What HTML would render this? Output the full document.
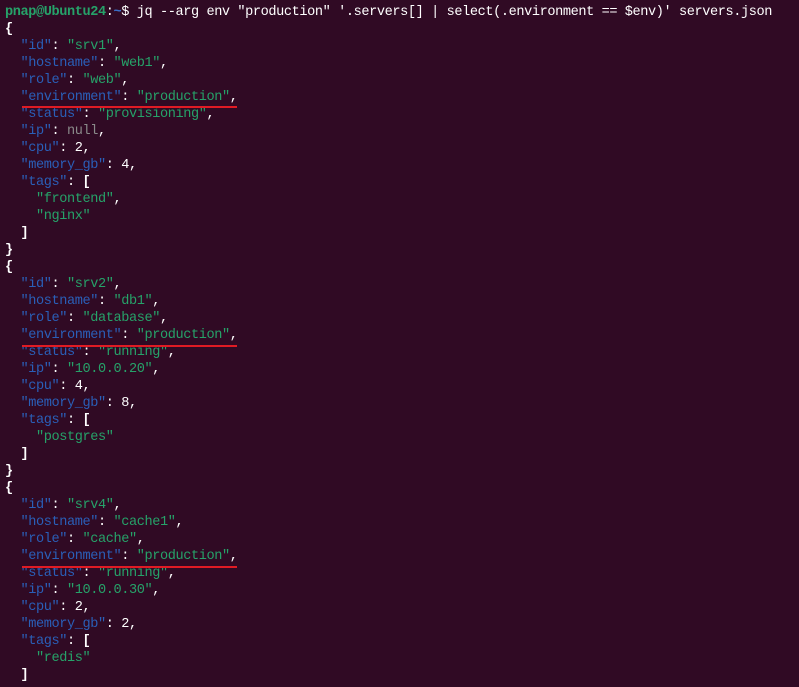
<!DOCTYPE html>
<html><head><style>
html,body{margin:0;padding:0;background:#300a24;width:799px;height:687px;overflow:hidden}
pre{margin:0;padding:4px 0 0 5px;font-family:"Liberation Mono",monospace;font-size:13.6px;letter-spacing:-0.41px;line-height:17px;color:#ffffff;white-space:pre}
.p{color:#26a269;font-weight:bold}.d{color:#3a6fc8;font-weight:bold}
.k{color:#2a5fb8}.s{color:#26a269}.n{color:#8a8a8a}.w{font-weight:bold}
.u{position:absolute;left:22px;width:215px;height:2px;background:#e01b24}
</style></head><body>
<pre><span class="p">pnap@Ubuntu24</span>:<span class="d">~</span>$ jq --arg env "production" '.servers[] | select(.environment == $env)' servers.json
<span class="w">{</span>
  <span class="k">"id"</span>: <span class="s">"srv1"</span>,
  <span class="k">"hostname"</span>: <span class="s">"web1"</span>,
  <span class="k">"role"</span>: <span class="s">"web"</span>,
  <span class="k">"environment"</span>: <span class="s">"production"</span>,
  <span class="k">"status"</span>: <span class="s">"provisioning"</span>,
  <span class="k">"ip"</span>: <span class="n">null</span>,
  <span class="k">"cpu"</span>: 2,
  <span class="k">"memory_gb"</span>: 4,
  <span class="k">"tags"</span>: <span class="w">[</span>
    <span class="s">"frontend"</span>,
    <span class="s">"nginx"</span>
  <span class="w">]</span>
<span class="w">}</span>
<span class="w">{</span>
  <span class="k">"id"</span>: <span class="s">"srv2"</span>,
  <span class="k">"hostname"</span>: <span class="s">"db1"</span>,
  <span class="k">"role"</span>: <span class="s">"database"</span>,
  <span class="k">"environment"</span>: <span class="s">"production"</span>,
  <span class="k">"status"</span>: <span class="s">"running"</span>,
  <span class="k">"ip"</span>: <span class="s">"10.0.0.20"</span>,
  <span class="k">"cpu"</span>: 4,
  <span class="k">"memory_gb"</span>: 8,
  <span class="k">"tags"</span>: <span class="w">[</span>
    <span class="s">"postgres"</span>
  <span class="w">]</span>
<span class="w">}</span>
<span class="w">{</span>
  <span class="k">"id"</span>: <span class="s">"srv4"</span>,
  <span class="k">"hostname"</span>: <span class="s">"cache1"</span>,
  <span class="k">"role"</span>: <span class="s">"cache"</span>,
  <span class="k">"environment"</span>: <span class="s">"production"</span>,
  <span class="k">"status"</span>: <span class="s">"running"</span>,
  <span class="k">"ip"</span>: <span class="s">"10.0.0.30"</span>,
  <span class="k">"cpu"</span>: 2,
  <span class="k">"memory_gb"</span>: 2,
  <span class="k">"tags"</span>: <span class="w">[</span>
    <span class="s">"redis"</span>
  <span class="w">]</span></pre>
<div class="u" style="top:106px"></div>
<div class="u" style="top:345px"></div>
<div class="u" style="top:566px"></div>
</body></html>
